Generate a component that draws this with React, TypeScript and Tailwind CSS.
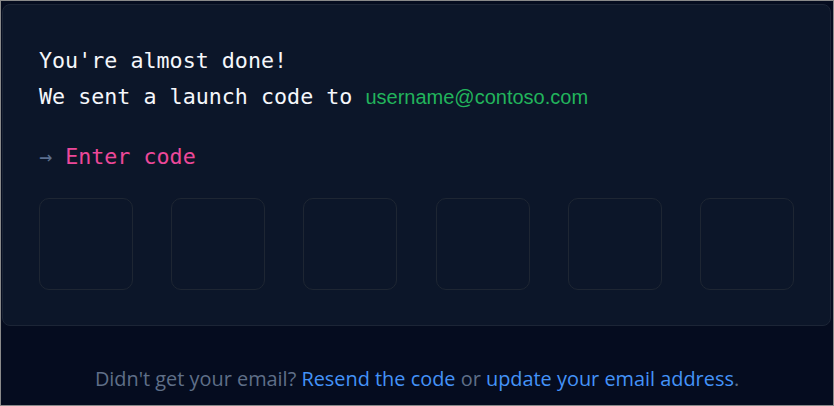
import React from 'react';

function CodeBox() {
  return <div className="w-[94px] h-[92px] rounded-[10px] border border-[#1e2633] bg-[#0c1629]" />;
}

export default function App() {
  return (
    <div className="w-[834px] h-[406px] border border-[#8a8a8a] bg-[#050c1f] overflow-hidden flex flex-col">
      <div className="pl-px pr-[2px] pt-[3px]">
        <div className="rounded-lg border border-[#1c2536] bg-[#0c1629] px-9 pt-[38px] pb-[35px]">
          <div className="text-[21.7px] leading-9 text-[#f5f7fb] font-['DejaVu_Sans_Mono',monospace]">
            <div>You're almost done!</div>
            <div className="flex items-baseline whitespace-pre">
              We sent a launch code to{' '}
              <span className="text-[20px] text-[#22b45c] font-['Liberation_Sans',Arial,sans-serif]">
                username@contoso.com
              </span>
            </div>
          </div>
          <div className="mt-6 text-[21.7px] leading-9 whitespace-pre font-['DejaVu_Sans_Mono',monospace]">
            <span className="text-[#5b6f8f]">→ </span>
            <span className="text-[#ec4899]">Enter code</span>
          </div>
          <div className="mt-[23px] flex justify-between">
            <CodeBox />
            <CodeBox />
            <CodeBox />
            <CodeBox />
            <CodeBox />
            <CodeBox />
          </div>
        </div>
      </div>
      <div className="flex-1 flex items-center justify-center pt-[26px]">
        <p className="text-[19.9px] text-[#5f6f88] font-['Open_Sans','Liberation_Sans',sans-serif]">
          Didn't get your email? <span className="text-[#4493f8]">Resend the code</span> or{' '}
          <span className="text-[#4493f8]">update your email address</span>.
        </p>
      </div>
    </div>
  );
}
